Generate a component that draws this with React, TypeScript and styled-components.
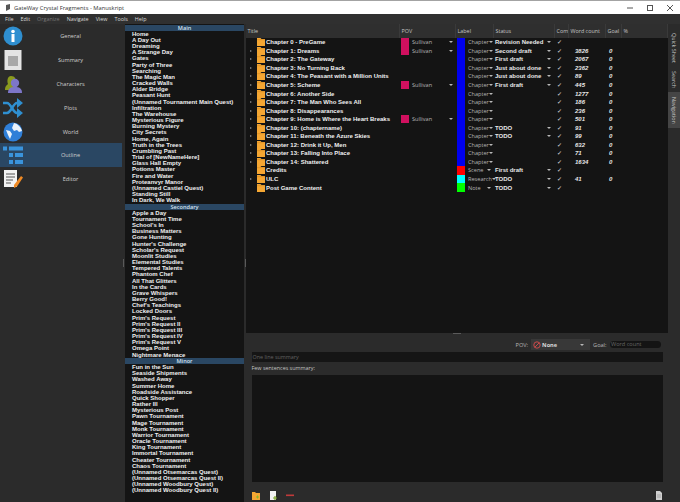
import styled, { createGlobalStyle } from "styled-components";

const GlobalStyle = createGlobalStyle`
  html, body {
    margin: 0;
    padding: 0;
    background: #2b2b2b;
    overflow: hidden;
  }
`;

const Window = styled.div`
  width: 680px;
  height: 502px;
  display: flex;
  flex-direction: column;
  background: #2b2b2b;
  font-family: "Open Sans", "Liberation Sans", sans-serif;
  color: #d0d0d0;
  overflow: hidden;
`;

const TitleBar = styled.div`
  height: 14px;
  flex: none;
  box-sizing: border-box;
  border-top: 1px solid #a3a3a3;
  background: #fff;
  display: flex;
  align-items: center;
  padding-left: 5px;
  gap: 3px;
  font-size: 5.8px;
  color: #333;
`;

const TitleText = styled.span`
  flex: 1;
`;

const WinButtons = styled.div`
  display: flex;
  align-items: center;
  gap: 14px;
  padding-right: 7px;
  color: #444;
`;

const MenuBar = styled.div`
  height: 10px;
  flex: none;
  display: flex;
  align-items: center;
  padding-left: 5px;
  gap: 7px;
  font-size: 5.4px;
  background: #303030;
  color: #d8d8d8;
`;

const MenuItem = styled.span<{ $off?: boolean }>`
  color: ${(p) => (p.$off ? "#777" : "#d8d8d8")};
`;

const Body = styled.div`
  flex: 1;
  min-height: 0;
  display: flex;
`;

const Nav = styled.div`
  width: 122px;
  flex: none;
  display: flex;
  flex-direction: column;
  padding-top: 0.5px;
`;

const NavItem = styled.div<{ $active?: boolean }>`
  height: 23.8px;
  flex: none;
  display: flex;
  align-items: center;
  padding-left: 3px;
  background: ${(p) => (p.$active ? "#2a4763" : "transparent")};
`;

const NavLabel = styled.span`
  flex: 1;
  text-align: center;
  font-size: 5.6px;
  padding-right: 4px;
  color: #cfcfcf;
`;

const Handle = styled.div<{ $w: number }>`
  width: ${(p) => p.$w}px;
  flex: none;
  display: flex;
  align-items: center;
  justify-content: center;
  padding-bottom: 1px;
  &::before {
    content: "";
    width: 1px;
    height: 8px;
    background: #5a5a5a;
  }
`;

const ListPane = styled.div`
  width: 119px;
  flex: none;
  background: #141414;
  padding-top: 0.5px;
  box-sizing: border-box;
`;

const ListHeader = styled.div`
  height: 6.2px;
  line-height: 6.2px;
  background: #2a4763;
  text-align: center;
  font-size: 5.6px;
  font-weight: 600;
  color: #d4e2f0;
`;

const ListRow = styled.div`
  height: 6.18px;
  line-height: 6.18px;
  padding-left: 7px;
  font-family: "Liberation Sans", sans-serif;
  font-size: 6px;
  font-weight: 700;
  color: #f0f0f0;
  white-space: nowrap;
`;

const Main = styled.div`
  flex: 1;
  min-width: 0;
  display: flex;
  flex-direction: column;
`;

const OutlinePane = styled.div`
  height: 308.5px;
  flex: none;
  background: #141414;
  display: flex;
  flex-direction: column;
`;

const columns = "154px 56px 38px 61px 14px 37px 16px 1fr";

const HeaderRow = styled.div`
  height: 14px;
  flex: none;
  display: grid;
  grid-template-columns: ${columns};
  background: #2f2f2f;
  font-size: 5.4px;
  color: #c4c4c4;
`;

const HeaderCell = styled.div`
  display: flex;
  align-items: center;
  padding-left: 1.5px;
  border-right: 1px solid #3a3a3a;
  white-space: nowrap;
  overflow: hidden;
`;

const Row = styled.div`
  height: 8.55px;
  flex: none;
  display: grid;
  grid-template-columns: ${columns};
  align-items: center;
  font-size: 5.6px;
`;

const TitleCell = styled.div`
  display: flex;
  align-items: center;
  padding-left: 3.5px;
  font-family: "Liberation Sans", sans-serif;
  font-weight: 700;
  font-size: 6px;
  color: #f0f0f0;
  white-space: nowrap;
`;

const Arrow = styled.span<{ $show: boolean }>`
  width: 0;
  height: 0;
  flex: none;
  border-left: 2px solid ${(p) => (p.$show ? "#8a8a8a" : "transparent")};
  border-top: 1.5px solid transparent;
  border-bottom: 1.5px solid transparent;
  margin-right: 5.5px;
`;

const Folder = styled.svg`
  width: 8px;
  height: 8px;
  flex: none;
  margin-right: 1px;
`;

const PickCell = styled.div`
  display: flex;
  align-items: center;
  height: 100%;
  padding-left: 1px;
  color: #b4b4b4;
  white-space: nowrap;
  position: relative;
`;

const Swatch = styled.span<{ $color: string }>`
  width: 8px;
  height: 8.5px;
  flex: none;
  margin-right: 3px;
  background: ${(p) => p.$color};
`;

const Caret = styled.span<{ $bright?: boolean }>`
  margin-left: auto;
  margin-right: ${(p) => (p.$bright ? "4px" : "3px")};
  width: 0;
  height: 0;
  flex: none;
  border-left: 2px solid transparent;
  border-right: 2px solid transparent;
  border-top: 2px solid #b8b8b8;
`;

const StatusCell = styled.div`
  display: flex;
  align-items: center;
  padding-left: 1px;
  font-family: "Liberation Sans", sans-serif;
  font-weight: 700;
  font-size: 6px;
  color: #e8e8e8;
  white-space: nowrap;
`;

const CheckCell = styled.div`
  font-size: 6px;
  padding-left: 2px;
  color: #e0e0e0;
`;

const NumberCell = styled.div<{ $pad: number }>`
  padding-left: ${(p) => p.$pad}px;
  font-family: "Liberation Sans", sans-serif;
  font-weight: 700;
  font-style: italic;
  font-size: 6px;
  color: #e8e8e8;
`;

const Splitter = styled.div`
  height: 5px;
  flex: none;
  display: flex;
  justify-content: center;
  align-items: flex-start;
  padding-right: 0;
  &::before {
    content: "";
    width: 8px;
    height: 1px;
    background: #5a5a5a;
  }
`;

const Details = styled.div`
  flex: 1;
  min-height: 0;
  display: flex;
  flex-direction: column;
  padding: 0 5px 0 5.5px;
`;

const PovRow = styled.div`
  height: 14px;
  flex: none;
  display: flex;
  justify-content: flex-end;
  align-items: center;
  font-size: 5.6px;
  padding-right: 2px;
  color: #b8b8b8;
`;

const PovLabel = styled.span`
  margin-right: 3px;
`;

const PovSelect = styled.div`
  width: 59px;
  height: 11px;
  display: flex;
  align-items: center;
  padding: 0 3px 0 1.5px;
  box-sizing: border-box;
  background: #383838;
  gap: 1.5px;
  margin-right: 3px;
  color: #d8d8d8;
  font-weight: 700;
`;

const GoalInput = styled.div`
  width: 50px;
  height: 7.5px;
  line-height: 7.5px;
  border-radius: 4px;
  margin-left: 3px;
  padding-left: 1.5px;
  background: #141414;
  color: #666;
`;

const SummaryLine = styled.div`
  height: 10px;
  line-height: 10px;
  flex: none;
  margin-top: 0.5px;
  padding-left: 1px;
  background: #151515;
  font-size: 5.4px;
  color: #636363;
`;

const SummaryLabel = styled.div`
  height: 12.5px;
  line-height: 12.5px;
  flex: none;
  font-size: 5.4px;
  color: #c4c4c4;
`;

const SummaryBox = styled.div`
  height: 107.5px;
  flex: none;
  background: #141414;
`;

const BottomBar = styled.div`
  flex: 1;
  display: flex;
  align-items: center;
  gap: 9px;
  padding-top: 6px;
`;

const BarIcon = styled.svg`
  width: 8px;
  height: 9px;
  flex: none;
`;

const BarSpacer = styled.div`
  flex: 1;
`;

const SideTabs = styled.div`
  width: 12px;
  flex: none;
  display: flex;
  flex-direction: column;
  padding-top: 3px;
  align-items: stretch;
  background: #2b2b2b;
`;

const SideTab = styled.div<{ $h: number; $active?: boolean }>`
  height: ${(p) => p.$h}px;
  flex: none;
  writing-mode: vertical-rl;
  text-align: center;
  line-height: 12px;
  font-size: 5.4px;
  background: ${(p) => (p.$active ? "#454545" : "transparent")};
  color: #c8c8c8;
`;

const NavSvg = styled.svg`
  width: 20px;
  height: 20px;
  flex: none;
`;

const main = [
  "Home", "A Day Out", "Dreaming", "A Strange Day", "Gates", "Party of Three", "Searching", "The Magic Man",
  "Cracked Walls", "Alder Bridge", "Peasant Hunt", "(Unnamed Tournament Main Quest)", "Infiltration", "The Warehouse",
  "Mysterious Figure", "Burning Mystery", "City Secrets", "Home, Again", "Truth in the Trees", "Crumbling Past",
  "Trial of [NewNameHere]", "Glass Hall Empty", "Potions Master", "Fire and Water", "Proteanvyr Manor",
  "(Unnamed Castiel Quest)", "Standing Still", "In Dark, We Walk",
];

const secondary = [
  "Apple a Day", "Tournament Time", "School's In", "Business Matters", "Gone Hunting", "Hunter's Challenge",
  "Scholar's Request", "Moonlit Studies", "Elemental Studies", "Tempered Talents", "Phantom Chef", "All That Glitters",
  "In the Cards", "Grave Whispers", "Berry Good!", "Chef's Teachings", "Locked Doors", "Prim's Request",
  "Prim's Request II", "Prim's Request III", "Prim's Request IV", "Prim's Request V", "Omega Point", "Nightmare Menace",
];

const minor = [
  "Fun in the Sun", "Seaside Shipments", "Washed Away", "Summer Home", "Roadside Assistance", "Quick Shopper",
  "Rather Ill", "Mysterious Post", "Pawn Tournament", "Mage Tournament", "Monk Tournament", "Warrior Tournament",
  "Oracle Tournament", "King Tournament", "Immortal Tournament", "Cheater Tournament", "Chaos Tournament",
  "(Unnamed Otsemarcas Quest)", "(Unnamed Otsemarcas Quest II)", "(Unnamed Woodbury Quest)",
  "(Unnamed Woodbury Quest II)",
];

type Chapter = {
  title: string;
  arrow?: boolean;
  pov?: boolean;
  label?: [string, string];
  status?: string;
  words?: string;
  goal?: boolean;
};

const chapters: Chapter[] = [
  { title: "Chapter 0 - PreGame", pov: true, status: "Revision Needed" },
  { title: "Chapter 1: Dreams", arrow: true, pov: true, status: "Second draft", words: "3826", goal: true },
  { title: "Chapter 2: The Gateway", arrow: true, status: "First draft", words: "2067", goal: true },
  { title: "Chapter 3: No Turning Back", arrow: true, status: "Just about done", words: "2362", goal: true },
  { title: "Chapter 4: The Peasant with a Million Units", arrow: true, status: "Just about done", words: "89", goal: true },
  { title: "Chapter 5: Scheme", arrow: true, pov: true, status: "First draft", words: "445", goal: true },
  { title: "Chapter 6: Another Side", arrow: true, words: "1277", goal: true },
  { title: "Chapter 7: The Man Who Sees All", arrow: true, words: "186", goal: true },
  { title: "Chapter 8: Disappearances", arrow: true, words: "236", goal: true },
  { title: "Chapter 9: Home is Where the Heart Breaks", arrow: true, pov: true, words: "501", goal: true },
  { title: "Chapter 10: (chaptername)", arrow: true, status: "TODO", words: "91", goal: true },
  { title: "Chapter 11: Beneath the Azure Skies", arrow: true, status: "TODO", words: "99", goal: true },
  { title: "Chapter 12: Drink it Up, Men", arrow: true, words: "632", goal: true },
  { title: "Chapter 13: Falling Into Place", arrow: true, words: "71", goal: true },
  { title: "Chapter 14: Shattered", arrow: true, words: "1634", goal: true },
  { title: "Credits", label: ["#ff0000", "Scene"], status: "First draft" },
  { title: "ULC", arrow: true, label: ["#00ffff", "Research"], status: "TODO", words: "41", goal: true },
  { title: "Post Game Content", label: ["#00ff00", "Note"], status: "TODO" },
];

const headers = ["Title", "POV", "Label", "Status", "Compile", "Word count", "Goal", "%"];

function FolderIcon() {
  return (
    <Folder viewBox="0 0 8 8">
      <path d="M0 0h3.5l1 1H8v7H0z" fill="#f5a733" />
      <rect y="1.6" width="8" height="0.5" fill="#c9811d" />
    </Folder>
  );
}

function NavIcon({ name }: { name: string }) {
  switch (name) {
    case "General":
      return (
        <NavSvg viewBox="0 0 20 20">
          <circle cx="10" cy="10" r="9.5" fill="#2f8fd0" />
          <rect x="8.5" y="8" width="3" height="8" fill="#fff" />
          <circle cx="10" cy="5.5" r="1.8" fill="#fff" />
        </NavSvg>
      );
    case "Summary":
      return (
        <NavSvg viewBox="0 0 20 20">
          <rect x="1.5" y="0" width="17" height="22" fill="#e4e4e4" />
          <rect x="5" y="6" width="10" height="10" fill="#a8a8a8" />
        </NavSvg>
      );
    case "Characters":
      return (
        <NavSvg viewBox="0 0 20 20">
          <path d="M2 16c0-4 2-5 3-6-1-2-1-8 3-8s5 3 5 6l-4 8z" fill="#8a9a1e" />
          <circle cx="12" cy="9" r="4.2" fill="#7d76c9" />
          <path d="M5 19c0-5 3-6 7-6s7 1 7 6z" fill="#7d76c9" />
        </NavSvg>
      );
    case "Plots":
      return (
        <NavSvg viewBox="0 0 20 20">
          <path
            d="M0 5h4c4 0 6 10 10 10h2M0 15h4c4 0 6-10 10-10h2"
            fill="none"
            stroke="#2f8fd0"
            strokeWidth="2.6"
          />
          <path d="M14 0l6 5-6 5zM14 10l6 5-6 5z" fill="#2f8fd0" />
        </NavSvg>
      );
    case "World":
      return (
        <NavSvg viewBox="0 0 20 20">
          <circle cx="10" cy="10" r="9.5" fill="#2f7fd8" />
          <path d="M11 1c4 1 7 4 8 8l-3 1-2-2-3 1-2-3zM3 8l4 1 2 3-2 5-2-4z" fill="#eaf2fb" />
        </NavSvg>
      );
    case "Outline":
      return (
        <NavSvg viewBox="0 0 20 20" style={{ overflow: "visible" }}>
          <g fill="#3a94dc">
            <rect x="0" y="1.5" width="4" height="4" />
            <rect x="6" y="1.5" width="14" height="4" />
            <rect x="6" y="8" width="4" height="4" />
            <rect x="12" y="8" width="8" height="4" />
            <rect x="6" y="15" width="4" height="4" />
            <rect x="12" y="15" width="8" height="4" />
          </g>
        </NavSvg>
      );
    default:
      return (
        <NavSvg viewBox="0 0 20 20">
          <rect x="1" y="1" width="13" height="17" fill="#f2f2f2" />
          <path d="M3 5h9M3 8h9M3 11h7M3 14h5" stroke="#555" strokeWidth="1" />
          <path d="M18 7l2 1.5-6 9-3 1.5 0-3z" fill="#f08a24" />
        </NavSvg>
      );
  }
}

export default function App() {
  const navItems = ["General", "Summary", "Characters", "Plots", "World", "Outline", "Editor"];

  return (
    <Window>
      <GlobalStyle />
      <TitleBar>
        <svg width="6" height="7" viewBox="0 0 6 7">
          <path d="M1 1l4-1v5L1 7z" fill="#555" />
        </svg>
        <TitleText>GateWay Crystal Fragments - Manuskript</TitleText>
        <WinButtons>
          <svg width="6" height="6" viewBox="0 0 6 6">
            <path d="M0 3h6" stroke="#555" />
          </svg>
          <svg width="6" height="6" viewBox="0 0 6 6">
            <rect x=".5" y=".5" width="5" height="5" fill="none" stroke="#555" />
          </svg>
          <svg width="6" height="6" viewBox="0 0 6 6">
            <path d="M0 0l6 6M6 0L0 6" stroke="#555" />
          </svg>
        </WinButtons>
      </TitleBar>
      <MenuBar>
        <MenuItem>File</MenuItem>
        <MenuItem>Edit</MenuItem>
        <MenuItem $off>Organize</MenuItem>
        <MenuItem>Navigate</MenuItem>
        <MenuItem>View</MenuItem>
        <MenuItem>Tools</MenuItem>
        <MenuItem>Help</MenuItem>
      </MenuBar>
      <Body>
        <Nav>
          {navItems.map((n) => (
            <NavItem key={n} $active={n === "Outline"}>
              <NavIcon name={n} />
              <NavLabel>{n}</NavLabel>
            </NavItem>
          ))}
        </Nav>
        <Handle $w={3} />
        <ListPane>
          <ListHeader>Main</ListHeader>
          {main.map((t) => (
            <ListRow key={t}>{t}</ListRow>
          ))}
          <ListHeader>Secondary</ListHeader>
          {secondary.map((t) => (
            <ListRow key={t}>{t}</ListRow>
          ))}
          <ListHeader>Minor</ListHeader>
          {minor.map((t) => (
            <ListRow key={t}>{t}</ListRow>
          ))}
        </ListPane>
        <Handle $w={2} />
        <Main>
          <OutlinePane>
            <HeaderRow>
              {headers.map((h) => (
                <HeaderCell key={h}>{h}</HeaderCell>
              ))}
            </HeaderRow>
            {chapters.map((c) => (
              <Row key={c.title}>
                <TitleCell>
                  <Arrow $show={!!c.arrow} />
                  <FolderIcon />
                  {c.title}
                </TitleCell>
                <PickCell>
                  {c.pov && (
                    <>
                      <Swatch $color="#d0105f" />
                      Sullivan
                      <Caret />
                    </>
                  )}
                </PickCell>
                <PickCell>
                  <Swatch $color={c.label ? c.label[0] : "#0000ee"} />
                  {c.label ? c.label[1] : "Chapter"}
                  <Caret />
                </PickCell>
                <StatusCell>
                  {c.status}
                  {c.status && <Caret $bright />}
                </StatusCell>
                <CheckCell>✓</CheckCell>
                <NumberCell $pad={6}>{c.words}</NumberCell>
                <NumberCell $pad={3}>{c.goal ? "0" : ""}</NumberCell>
                <div />
              </Row>
            ))}
          </OutlinePane>
          <Splitter />
          <Details>
            <PovRow>
              <PovLabel>POV:</PovLabel>
              <PovSelect>
                <svg width="8" height="8" viewBox="0 0 8 8">
                  <circle cx="4" cy="4" r="3.2" fill="none" stroke="#c84a4a" strokeWidth="1" />
                  <path d="M1.8 6.2l4.4-4.4" stroke="#c84a4a" />
                </svg>
                None
                <Caret />
              </PovSelect>
              Goal:
              <GoalInput>Word count</GoalInput>
            </PovRow>
            <SummaryLine>One line summary</SummaryLine>
            <SummaryLabel>Few sentences summary:</SummaryLabel>
            <SummaryBox />
            <BottomBar>
              <BarIcon viewBox="0 0 8 9">
                <path d="M0 1h3l1 1h4v7H0z" fill="#f5a733" />
                <path d="M4 6h3M5.5 4.5v3" stroke="#8ab52a" />
              </BarIcon>
              <BarIcon viewBox="0 0 8 9">
                <path d="M1 0h6v9H1z" fill="#f2f2f2" />
                <path d="M4 7h4M6 5v4" stroke="#7ea52a" strokeWidth="1.2" />
              </BarIcon>
              <BarIcon viewBox="0 0 8 9">
                <rect y="3.5" width="8" height="1.6" fill="#c03a3a" />
              </BarIcon>
              <BarSpacer />
              <BarIcon viewBox="0 0 8 9">
                <path d="M1 0h4l2 2v7H1z" fill="#cfcfcf" />
                <path d="M2 4h4M2 6h4" stroke="#888" strokeWidth=".6" />
              </BarIcon>
            </BottomBar>
          </Details>
        </Main>
        <SideTabs>
          <SideTab $h={41}>Quick Sheet</SideTab>
          <SideTab $h={24}>Search</SideTab>
          <SideTab $h={36} $active>
            Navigation
          </SideTab>
        </SideTabs>
      </Body>
    </Window>
  );
}
